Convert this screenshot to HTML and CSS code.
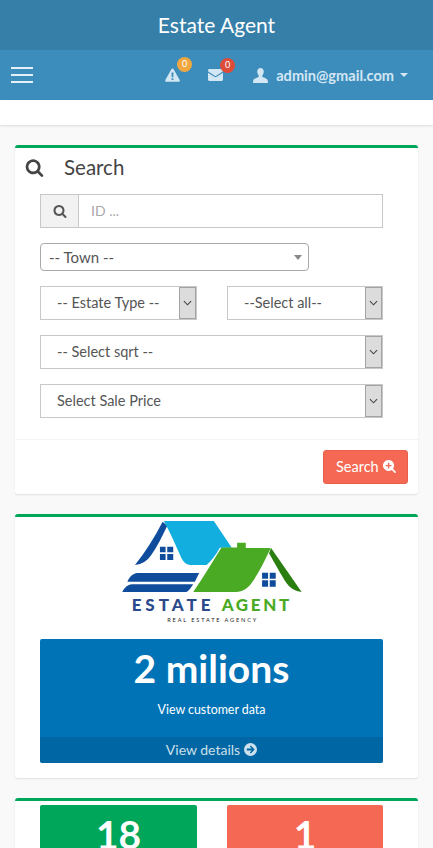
FILE: index.html
```html
<!DOCTYPE html>
<html lang="en">
<head>
<meta charset="UTF-8">
<meta name="viewport" content="width=device-width, initial-scale=1.0">
<title>Estate Agent</title>
<link rel="stylesheet" href="styles.css">
</head>
<body>
  <svg class="sprite" aria-hidden="true">
    <symbol id="i-search" viewBox="0 0 1792 1792">
      <path d="M1216 832q0-185-131.500-316.500t-316.500-131.500-316.500 131.500-131.500 316.500 131.500 316.500 316.500 131.500 316.500-131.500 131.500-316.500zm512 832q0 52-38 90t-90 38q-54 0-90-38l-343-342q-179 124-399 124-143 0-273.500-55.500t-225-150-150-225-55.500-273.500 55.500-273.500 150-225 225-150 273.500-55.500 273.500 55.500 225 150 150 225 55.500 273.500q0 220-124 399l343 343q37 37 37 90z"/>
    </symbol>
    <symbol id="i-chevron" viewBox="0 0 10 6">
      <path d="M1 1l4 4 4-4" fill="none" stroke="#444" stroke-width="1.200"/>
    </symbol>
  </svg>

  <header class="logo-bar">Estate Agent</header>

  <nav class="navbar">
    <button class="menu-toggle" aria-label="Menu"><span></span><span></span><span></span></button>
    <div class="nav-items">
      <a class="nav-icon">
        <svg width="15" height="14" viewBox="0 0 15 14"><path fill-rule="evenodd" d="M7.500.5c.5 0 .9.300 1.100.7l6.100 10.900c.4.800-.1 1.700-1 1.700H1.300c-.9 0-1.400-.9-1-1.700L6.400 1.200C6.600.8 7 .5 7.500.5zM6.500 4.500l.2 4.700h1.600l.2-4.700zM6.600 10.200v1.800h1.800v-1.800z"/></svg>
        <span class="badge badge-orange">0</span>
      </a>
      <a class="nav-icon">
        <svg width="15" height="12" viewBox="0 0 15 12"><path d="M1.500 0h12C14.300 0 15 .6 15 1.400c0 .7-.4 1.200-1 1.600L8.300 6.700c-.5.300-1.100.3-1.600 0L1 3C.4 2.600 0 2.100 0 1.400 0 .6.700 0 1.500 0z"/><path d="M0 3.700l6.300 4.100c.7.500 1.700.5 2.400 0L15 3.700v6.800c0 .8-.7 1.500-1.500 1.500h-12C.7 12 0 11.300 0 10.500z"/></svg>
        <span class="badge badge-red">0</span>
      </a>
      <a class="user-menu">
        <svg width="15" height="15" viewBox="0 0 15 15"><path d="M7.500 0c2 0 3.300 1.500 3.300 3.600 0 1.500-.6 3-1.500 3.800v1.300c.3.500 4.200 1.500 5.100 2.900.4.700.6 2 .6 3.400H0c0-1.400.2-2.700.6-3.400 1-1.400 4.800-2.400 5.100-2.900V7.400c-.9-.8-1.500-2.300-1.500-3.800C4.200 1.500 5.500 0 7.500 0z"/></svg>
        <span class="user-email">admin@gmail.com</span>
        <span class="caret"></span>
      </a>
    </div>
  </nav>

  <div class="content-header"></div>

  <main class="content">
    <section class="card">
      <h3 class="card-title">
        <svg class="title-icon"><use href="#i-search"/></svg>
        Search
      </h3>
      <form class="form-body">
        <div class="input-group">
          <span class="addon"><svg class="addon-icon"><use href="#i-search"/></svg></span>
          <input type="text" placeholder="ID ...">
        </div>
        <div class="town-select">
          <span>-- Town --</span>
          <b class="town-arrow"></b>
        </div>
        <div class="two-col">
          <div class="select-box"><span>-- Estate Type --</span><i class="select-arrow"><svg><use href="#i-chevron"/></svg></i></div>
          <div class="select-box"><span>--Select all--</span><i class="select-arrow"><svg><use href="#i-chevron"/></svg></i></div>
        </div>
        <div class="select-box"><span>-- Select sqrt --</span><i class="select-arrow"><svg><use href="#i-chevron"/></svg></i></div>
        <div class="select-box"><span>Select Sale Price</span><i class="select-arrow"><svg><use href="#i-chevron"/></svg></i></div>
      </form>
      <div class="card-footer">
        <button class="btn-search" type="button">
          Search
          <svg width="16" height="16" viewBox="0 0 16 16"><path fill-rule="evenodd" d="M6.800 0a6.800 6.800 0 0 1 5.500 10.800l3.300 3.300c.5.500.5 1.100 0 1.500-.4.500-1 .5-1.500 0l-3.300-3.300A6.800 6.800 0 1 1 6.800 0zM6 3.300v2.700H3.300v1.700H6v2.700h1.700V7.700h2.700V6H7.700V3.300z"/></svg>
        </button>
      </div>
    </section>

    <section class="card card-stats">
      <svg class="logo" viewBox="30 30 550 315" role="img" aria-label="Estate Agent logo">
        <path fill="#0f4c9c" d="M158 35l14 12c-14 30-30 62-48 88-12 18-28 28-49 30 32-40 60-85 83-130z"/>
        <path fill="#12aee0" d="M162 33h150l54 80h-36c-12 22-26 40-40 52h-50c-12-2-20-10-26-22-14-32-32-72-52-110z"/>
        <path fill="#0f4c9c" d="M82 189h186l-13 26H52c6-14 16-24 30-26z"/>
        <path fill="#0f4c9c" d="M66 223h184c-6 10-12 18-20 23H37c6-13 16-22 29-23z"/>
        <path fill="#4aaa23" d="M335 112h47V98h26v16h75c-18 38-36 76-58 106-12 16-26 26-46 26H250c30-44 58-90 85-134z"/>
        <path fill="#2a7f10" d="M484 114l92 132c-20-2-36-12-48-30-14-22-32-54-50-86z"/>
        <path fill="#0f4c9c" d="M150 110h17v17h-17zM172 110h18v17h-18zM150 132h17v18h-17zM172 132h18v18h-18z"/>
        <path fill="#0f4c9c" d="M457 188h18v18h-18zM480 188h18v18h-18zM457 211h18v19h-18zM480 211h18v19h-18z"/>
        <text class="logo-name" x="65" y="304"><tspan class="logo-estate">ESTATE</tspan><tspan class="logo-agent" dx="22">AGENT</tspan></text>
        <text class="logo-sub" x="172" y="336">REAL ESTATE AGENCY</text>
      </svg>
      <div class="stat-box stat-blue">
        <h3 class="stat-value">2 milions</h3>
        <p class="stat-label">View customer data</p>
        <a class="stat-footer">
          View details
          <svg width="13" height="13" viewBox="0 0 13 13"><path fill-rule="evenodd" d="M6.500 0a6.500 6.500 0 1 1 0 13 6.500 6.500 0 0 1 0-13zM6.800 2.600L5.800 3.600l1.900 1.900H2.800v2h4.900L5.800 9.400l1 1 3.900-3.900z"/></svg>
        </a>
      </div>
    </section>

    <section class="card card-counts">
      <div class="two-col">
        <div class="stat-box stat-green"><h3 class="stat-value">18</h3></div>
        <div class="stat-box stat-coral"><h3 class="stat-value">1</h3></div>
      </div>
    </section>
  </main>
</body>
</html>
```

FILE: styles.css
```css
* {
  box-sizing: border-box;
}
html, body {
  height: 100%;
  overflow: hidden;
}
body {
  margin: 0;
  font-family: 'Lato', 'Noto Sans', sans-serif;
  font-size: 14px;
  color: #444;
  background: #f9f9f9;
}
.sprite {
  display: none;
}

/* top bars */
.logo-bar {
  height: 50px;
  line-height: 50px;
  text-align: center;
  font-size: 21px;
  color: #fff;
  background: #367fa9;
}
.navbar {
  height: 50px;
  display: flex;
  align-items: center;
  justify-content: space-between;
  padding: 0 25px 0 11px;
  background: #3c8dbc;
}
.menu-toggle {
  display: flex;
  flex-direction: column;
  gap: 5px;
  width: 22px;
  padding: 0;
  border: none;
  background: none;
}
.menu-toggle span {
  height: 2px;
  background: #e4f0f8;
}
.nav-items {
  display: flex;
  align-items: center;
  color: #d3e6f3;
}
.nav-items svg {
  fill: currentColor;
  display: block;
}
.nav-icon {
  position: relative;
  margin-right: 28px;
}
.badge {
  position: absolute;
  top: -11px;
  left: 12px;
  width: 15px;
  height: 15px;
  border-radius: 50%;
  font-size: 9px;
  line-height: 14px;
  text-align: center;
  color: #fff;
}
.badge-orange {
  background: #f0a73f;
}
.badge-red {
  background: #dd4b39;
}
.user-menu {
  display: flex;
  align-items: center;
  margin-left: 2px;
}
.user-email {
  margin-left: 8px;
  font-weight: 700;
  font-size: 14.6px;
}
.caret {
  margin-left: 6px;
  border-top: 4px solid currentColor;
  border-left: 4px solid transparent;
  border-right: 4px solid transparent;
}
.content-header {
  height: 25px;
  background: #fff;
  box-shadow: 0 1px 2px rgba(0,0,0,0.12);
}

/* cards */
.content {
  padding: 20px 15px 0;
}
.card {
  margin-bottom: 20px;
  border-top: 3px solid #00a65a;
  border-radius: 3px;
  background: #fff;
  box-shadow: 0 1px 2px rgba(0,0,0,0.1);
}
.card-title {
  display: flex;
  align-items: center;
  gap: 20px;
  height: 46px;
  margin: 0;
  padding: 0 0 8px 10px;
  font-size: 20.5px;
  font-weight: 400;
}
.title-icon {
  width: 19px;
  height: 19px;
  fill: #444;
}
.form-body {
  display: flex;
  flex-direction: column;
  gap: 15px;
  padding: 0 35px 21px 25px;
}
.input-group {
  display: flex;
  height: 34px;
  border: 1px solid #c8c8c8;
}
.addon {
  display: flex;
  align-items: center;
  justify-content: center;
  width: 38px;
  background: #f2f2f2;
  border-right: 1px solid #c8c8c8;
}
.addon-icon {
  width: 14px;
  height: 14px;
  fill: #555;
}
.input-group input {
  flex: 1;
  min-width: 0;
  padding: 0 12px 2px;
  border: none;
  font: inherit;
  font-size: 14px;
  color: #555;
}
.input-group input::placeholder {
  color: #aaa;
}
.town-select {
  display: flex;
  align-items: center;
  justify-content: space-between;
  width: 269px;
  height: 28px;
  padding: 0 6px 0 8px;
  border: 1px solid #aaa;
  border-radius: 4px;
  font-size: 15px;
  color: #555;
}
.town-arrow {
  border-top: 5px solid #888;
  border-left: 4px solid transparent;
  border-right: 4px solid transparent;
}
.two-col {
  display: grid;
  grid-template-columns: 157px 156px;
  gap: 30px;
}
.select-box {
  display: flex;
  align-items: center;
  justify-content: space-between;
  height: 34px;
  padding-left: 16px;
  border: 1px solid #c8c8c8;
  font-size: 14.5px;
  color: #555;
}
.select-box span {
  padding-bottom: 2px;
}
.select-arrow {
  display: flex;
  align-items: center;
  justify-content: center;
  width: 17px;
  height: 100%;
  background: #dcdcdc;
  border: 1px solid #a3a3a3;
}
.select-arrow svg {
  width: 9px;
  height: 6px;
}
.card-footer {
  display: flex;
  justify-content: flex-end;
  padding: 10px;
  border-top: 1px solid #f4f4f4;
}
.btn-search {
  display: flex;
  align-items: center;
  gap: 4px;
  width: 85px;
  height: 34px;
  padding: 0 0 2px 12px;
  border: 1px solid #e8604c;
  border-radius: 3px;
  background: #f56954;
  color: #fff;
  font: inherit;
  font-size: 14.5px;
}
.btn-search svg {
  fill: #fff;
  width: 13px;
  height: 13px;
}

/* stat boxes */
.card-stats {
  padding: 3px 35px 15px 25px;
}
.logo {
  display: block;
  width: 183px;
  height: 105px;
  margin: 0 auto 14px;
}
.logo-name {
  font-size: 51px;
  font-weight: 900;
}
.logo-estate {
  fill: #2a4a8c;
  letter-spacing: 12px;
}
.logo-agent {
  fill: #4aaa23;
  letter-spacing: 8px;
}
.logo-sub {
  font-size: 17px;
  letter-spacing: 5.5px;
  fill: #222;
}
.stat-box {
  border-radius: 2px;
  color: #fff;
  text-align: center;
}
.stat-blue {
  height: 124px;
  display: flex;
  flex-direction: column;
  background: #0073b7;
}
.stat-value {
  margin: 0;
  padding-top: 7px;
  font-size: 39px;
  line-height: 44px;
  font-weight: 700;
}
.stat-label {
  flex: 1;
  margin: 0;
  padding-top: 12px;
  font-size: 12.4px;
}
.stat-footer {
  display: flex;
  align-items: center;
  justify-content: center;
  gap: 4px;
  height: 26px;
  padding-bottom: 2px;
  background: rgba(0,0,0,0.1);
  color: rgba(255,255,255,0.8);
  font-size: 14px;
}
.stat-footer svg {
  fill: currentColor;
}
.card-counts {
  padding: 4px 35px 15px 25px;
}
.stat-green {
  height: 120px;
  background: #00a65a;
}
.stat-coral {
  height: 120px;
  background: #f56954;
}
```
